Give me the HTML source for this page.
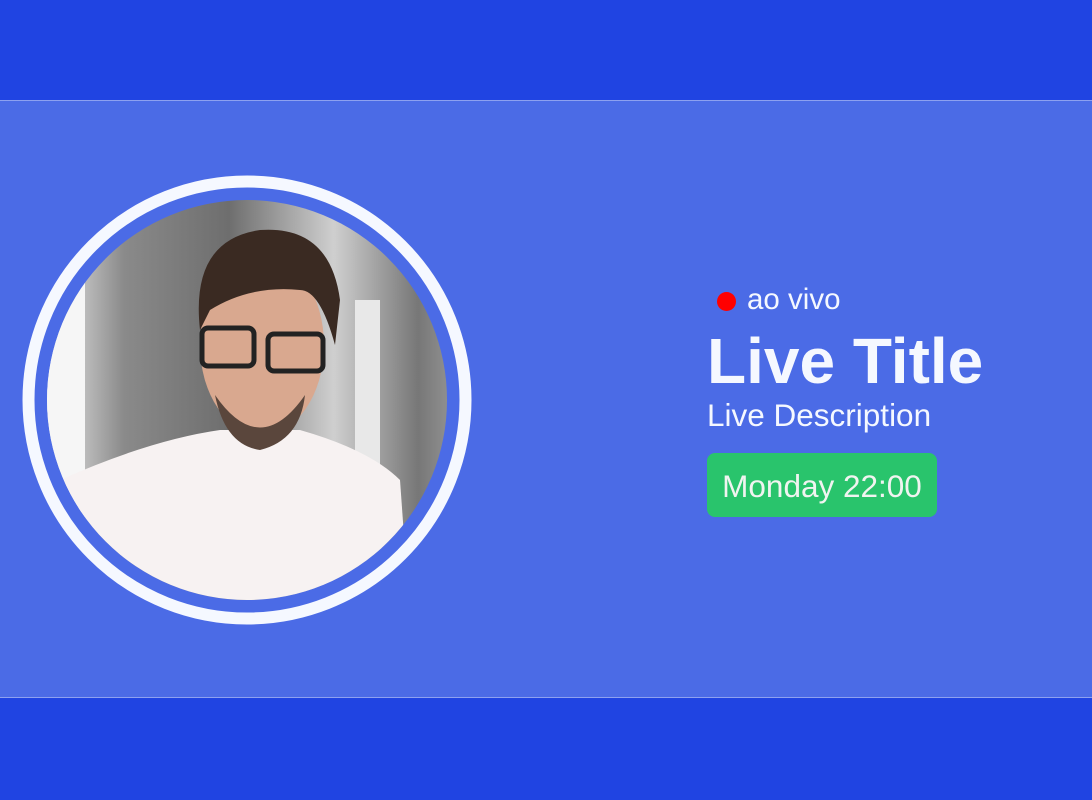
<!DOCTYPE html>
<html><head><meta charset="utf-8"><style>
html,body{margin:0;padding:0;width:1092px;height:800px;overflow:hidden;background:#2044e2;font-family:"Liberation Sans",Arial,sans-serif}
.mid{position:absolute;left:0;top:100px;width:1092px;height:598px;background:#4b6be6;border-top:1px solid #8da1f0;border-bottom:1px solid #8da1f0;box-sizing:border-box}
svg{position:absolute;left:0;top:0}
.t{position:absolute;color:#f5f8ff;white-space:nowrap}
.dot{position:absolute;left:717px;top:292px;width:19px;height:19px;border-radius:50%;background:#f00}
.btn{position:absolute;left:707px;top:453px;width:230px;height:64px;border-radius:8px;background:#29c46c;color:#f0f4f0;font-size:31.5px;line-height:66px;text-align:center}
</style></head><body>
<div class="mid"></div>
<svg width="1092" height="800">
<defs>
<clipPath id="c"><circle cx="247" cy="400" r="200"/></clipPath>
<linearGradient id="bg" x1="0" x2="1"><stop offset="0" stop-color="#f4f4f4"/><stop offset=".2" stop-color="#8a8a8a"/><stop offset=".45" stop-color="#6e6e6e"/><stop offset=".7" stop-color="#cfcfcf"/><stop offset=".9" stop-color="#777"/><stop offset="1" stop-color="#999"/></linearGradient>
</defs>
<circle cx="247" cy="400" r="218.5" fill="none" stroke="#f5f8ff" stroke-width="12"/>
<g clip-path="url(#c)">
<rect x="40" y="190" width="420" height="420" fill="url(#bg)"/>
<rect x="40" y="190" width="45" height="420" fill="#f6f6f6"/>
<rect x="355" y="300" width="25" height="200" fill="#e8e8e8"/>
<path d="M60 480 Q150 440 220 430 L300 430 Q370 450 400 480 L410 620 L60 620Z" fill="#f7f2f2"/>
<ellipse cx="262" cy="345" rx="62" ry="90" fill="#d9a88f"/>
<path d="M200 330 Q190 240 260 230 Q330 225 340 300 L335 345 Q320 290 300 290 Q250 285 210 310Z" fill="#3a2a22"/>
<path d="M215 395 Q260 460 305 395 Q300 440 260 450 Q225 445 215 395Z" fill="#5a463c"/>
<rect x="202" y="328" width="52" height="38" rx="6" fill="none" stroke="#222" stroke-width="5"/>
<rect x="268" y="334" width="55" height="37" rx="6" fill="none" stroke="#222" stroke-width="5"/>
</g>
</svg>
<div class="dot"></div>
<div class="t" style="left:747px;top:283px;font-size:29.5px">ao vivo</div>
<div class="t" style="left:707px;top:324px;font-size:64px;font-weight:bold">Live Title</div>
<div class="t" style="left:707px;top:397px;font-size:31.5px">Live Description</div>
<div class="btn">Monday 22:00</div>
</body></html>
